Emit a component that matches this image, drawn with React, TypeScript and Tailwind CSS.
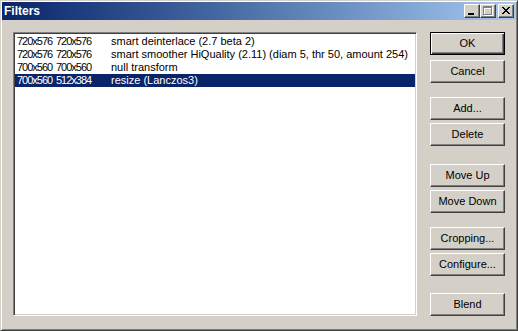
import React from 'react';

// lignes de la liste des filtres
const FILTERS = [
  { src: '720x576', dst: '720x576', name: 'smart deinterlace (2.7 beta 2)' },
  { src: '720x576', dst: '720x576', name: 'smart smoother HiQuality (2.11) (diam 5, thr 50, amount 254)' },
  { src: '700x560', dst: '700x560', name: 'null transform' },
  { src: '700x560', dst: '512x384', name: 'resize (Lanczos3)' },
];

const BUTTONS = [
  { label: 'OK', mt: 'mt-0', isDefault: true },
  { label: 'Cancel', mt: 'mt-[5px]' },
  { label: 'Add...', mt: 'mt-[14px]' },
  { label: 'Delete', mt: 'mt-[3px]' },
  { label: 'Move Up', mt: 'mt-[18px]' },
  { label: 'Move Down', mt: 'mt-[3px]' },
  { label: 'Cropping...', mt: 'mt-[14px]' },
  { label: 'Configure...', mt: 'mt-[3px]' },
  { label: 'Blend', mt: 'mt-[17px]' },
];

const raised =
  'border border-t-white border-l-white border-r-[#404040] border-b-[#404040] shadow-[inset_-1px_-1px_0_#808080]';

const CaptionButton: React.FC<{ children: React.ReactNode }> = ({ children }) => (
  <div className={`relative w-[16px] h-[14px] bg-[#d4d0c8] ${raised}`}>{children}</div>
);

export default function App() {
  const selected = 3;

  return (
    <div className="w-[518px] h-[331px] bg-[#d4d0c8] font-['Liberation_Sans',Arial,sans-serif] text-[11px] text-black border border-t-[#d4d0c8] border-l-[#d4d0c8] border-r-[#404040] border-b-[#404040] shadow-[inset_1px_1px_0_#ffffff,inset_-1px_-1px_0_#808080] p-[1px] flex flex-col">
      {/* Barre de titre */}
      <div className="h-[18px] flex items-center bg-gradient-to-r from-[#0a246a] to-[#a6caf0] pl-[2px] pr-[2px]">
        <span className="text-white font-bold text-[12px] leading-none flex-1">Filters</span>
        <div className="flex">
          <CaptionButton>
            <svg className="absolute left-[3px] top-[8px]" width="6" height="2">
              <rect x="0" y="0" width="6" height="2" fill="#000" />
            </svg>
          </CaptionButton>
          <CaptionButton>
            <svg className="absolute left-[2px] top-[1px]" width="10" height="10" shapeRendering="crispEdges">
              <g fill="#fff" transform="translate(1,1)">
                <rect x="0" y="0" width="9" height="2" />
                <rect x="0" y="0" width="1" height="9" />
                <rect x="8" y="0" width="1" height="9" />
                <rect x="0" y="8" width="9" height="1" />
              </g>
              <g fill="#808080">
                <rect x="0" y="0" width="9" height="2" />
                <rect x="0" y="0" width="1" height="9" />
                <rect x="8" y="0" width="1" height="9" />
                <rect x="0" y="8" width="9" height="1" />
              </g>
            </svg>
          </CaptionButton>
          <div className="w-[2px]" />
          <CaptionButton>
            <svg className="absolute left-[3px] top-[2px]" width="8" height="7" shapeRendering="crispEdges" fill="#000">
              <rect x="0" y="0" width="2" height="1" />
              <rect x="6" y="0" width="2" height="1" />
              <rect x="1" y="1" width="2" height="1" />
              <rect x="5" y="1" width="2" height="1" />
              <rect x="2" y="2" width="4" height="1" />
              <rect x="3" y="3" width="2" height="1" />
              <rect x="2" y="4" width="4" height="1" />
              <rect x="1" y="5" width="2" height="1" />
              <rect x="5" y="5" width="2" height="1" />
              <rect x="0" y="6" width="2" height="1" />
              <rect x="6" y="6" width="2" height="1" />
            </svg>
          </CaptionButton>
        </div>
      </div>

      {/* Contenu */}
      <div className="flex pl-[11px] pt-[12px]">
        <div className="w-[404px] h-[284px] bg-white border border-t-[#808080] border-l-[#808080] border-r-white border-b-white shadow-[inset_1px_1px_0_#404040,inset_-1px_-1px_0_#d4d0c8] p-[1px] pt-[2px]">
          {FILTERS.map((f, i) => (
            <div
              key={i}
              className={`h-[13px] leading-[13px] flex pl-[2px] whitespace-nowrap ${
                i === selected ? 'bg-[#0a246a] text-white' : 'text-black'
              }`}
            >
              <span className="w-[39px] tracking-[-1px]">{f.src}</span>
              <span className="w-[55px] tracking-[-1px]">{f.dst}</span>
              <span>{f.name}</span>
            </div>
          ))}
        </div>

        <div className="flex flex-col ml-[13px]">
          {BUTTONS.map((b) => (
            <div
              key={b.label}
              className={`${b.mt} w-[75px] h-[23px] flex items-center justify-center ${
                b.isDefault
                  ? 'border border-black shadow-[inset_1px_1px_0_#ffffff,inset_-1px_-1px_0_#404040,inset_-2px_-2px_0_#808080]'
                  : raised
              }`}
            >
              {b.label}
            </div>
          ))}
        </div>
      </div>
    </div>
  );
}
